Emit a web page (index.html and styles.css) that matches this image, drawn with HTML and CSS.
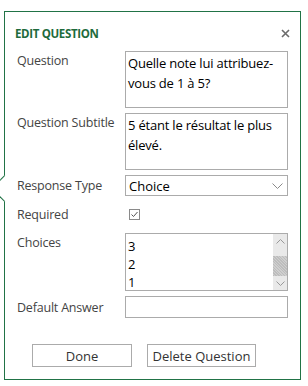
FILE: index.html
```html
<!DOCTYPE html>
<html>
<head>
<meta charset="utf-8">
<link rel="stylesheet" href="styles.css">
</head>
<body>
<div class="panel">
  <div class="notch"></div>
  <div class="header">
    <h1 class="title">EDIT QUESTION</h1>
    <svg class="close" width="9" height="9" viewBox="0 0 9 9"><path d="M1 1L8 8M8 1L1 8" stroke="#6b6b6b" stroke-width="1.6"/></svg>
  </div>
  <div class="form">
    <div class="label top">Question</div>
    <div class="box area">Quelle note lui attribuez-vous de 1 à 5?</div>

    <div class="label top">Question Subtitle</div>
    <div class="box area">5 étant le résultat le plus élevé.</div>

    <div class="label mid">Response Type</div>
    <div class="box select"><span>Choice</span>
      <svg width="11" height="6" viewBox="0 0 11 6"><path d="M0.5 0.5L5.5 5.5L10.5 0.5" fill="none" stroke="#8a8a8a" stroke-width="1"/></svg>
    </div>

    <div class="label mid req">Required</div>
    <div class="reqcell"><span class="check"><svg width="9" height="9" viewBox="0 0 9 9"><path d="M1.5 4.5L3.5 6.5L7.5 2" fill="none" stroke="#555" stroke-width="1"/></svg></span></div>

    <div class="label top">Choices</div>
    <div class="box list">
      <div class="items"><div>3</div><div>2</div><div>1</div></div>
      <div class="scroll">
        <div class="arrow"><svg width="9" height="5" viewBox="0 0 9 5"><path d="M0.5 4.5L4.5 0.5L8.5 4.5" fill="none" stroke="#999" stroke-width="1"/></svg></div>
        <div class="track"><div class="thumb"></div></div>
        <div class="arrow"><svg width="9" height="5" viewBox="0 0 9 5"><path d="M0.5 0.5L4.5 4.5L8.5 0.5" fill="none" stroke="#999" stroke-width="1"/></svg></div>
      </div>
    </div>

    <div class="label mid">Default Answer</div>
    <div class="box input"></div>
  </div>
  <div class="buttons">
    <button class="btn done">Done</button>
    <button class="btn del">Delete Question</button>
  </div>
</div>
</body>
</html>
```

FILE: styles.css
```css
* { box-sizing: border-box; }
body {
  margin: 0;
  background: #fff;
  font-family: "Open Sans", "Noto Sans", sans-serif;
}
.panel {
  position: relative;
  margin: 11px 0 0 4px;
  width: 297px;
  height: 369px;
  border: 1px solid #217346;
  background: #fff;
}
.notch {
  position: absolute;
  left: -10px;
  top: 167px;
  width: 19px;
  height: 19px;
  border-left: 1px solid #217346;
  border-bottom: 1px solid #217346;
  background: #fff;
  transform: rotate(45deg);
}
.header {
  display: flex;
  justify-content: space-between;
  align-items: center;
  padding: 10px 10px 0 10px;
  height: 32px;
}
.title {
  margin: 0;
  font-size: 11.5px;
  font-weight: 700;
  color: #1e6b3c;
  letter-spacing: -0.35px;
}
.close { margin-top: 1px; }
.form {
  display: grid;
  grid-template-columns: 108px 163px;
  row-gap: 5px;
  padding: 7px 0 0 12px;
}
.label {
  font-size: 12.5px;
  color: #444;
  letter-spacing: -0.2px;
}
.label.top { padding-top: 1px; }
.label.mid { display: flex; align-items: center; }
.box {
  border: 1px solid #ababab;
  background: #fff;
  font-size: 13px;
  color: #000;
}
.area {
  height: 57px;
  padding: 1px 3px 0 2px;
  line-height: 20px;
  letter-spacing: -0.2px;
}
.select {
  height: 21px;
  display: flex;
  align-items: center;
  justify-content: space-between;
  padding: 0 4px 0 3px;
}
.reqcell { height: 27px; display: flex; align-items: center; padding-left: 4px; }
.label.req { height: 27px; }
.check {
  width: 11px;
  height: 11px;
  border: 1px solid #8a8a8a;
  display: flex;
  align-items: center;
  justify-content: center;
}
.list {
  height: 58px;
  display: flex;
  justify-content: space-between;
}
.items { padding: 3px 0 0 2px; line-height: 18px; }
.scroll {
  width: 14px;
  display: flex;
  flex-direction: column;
  background: #e9e9e9;
}
.arrow { height: 14px; display: flex; align-items: center; justify-content: center; }
.track { flex: 1; display: flex; align-items: flex-end; }
.thumb {
  width: 100%;
  height: 20px;
  background-color: #c6c6c6;
  background-image: repeating-linear-gradient(45deg, #bdbdbd 0 1px, #cfcfcf 1px 2px);
}
.input { height: 22px; }
.buttons {
  display: flex;
  gap: 15px;
  padding: 26px 0 0 27px;
}
.btn {
  height: 23px;
  border: 1px solid #ababab;
  background: #fff;
  font-family: inherit;
  font-size: 13px;
  color: #333;
  padding: 0;
}
.done { width: 100px; }
.del { width: 109px; }
```
